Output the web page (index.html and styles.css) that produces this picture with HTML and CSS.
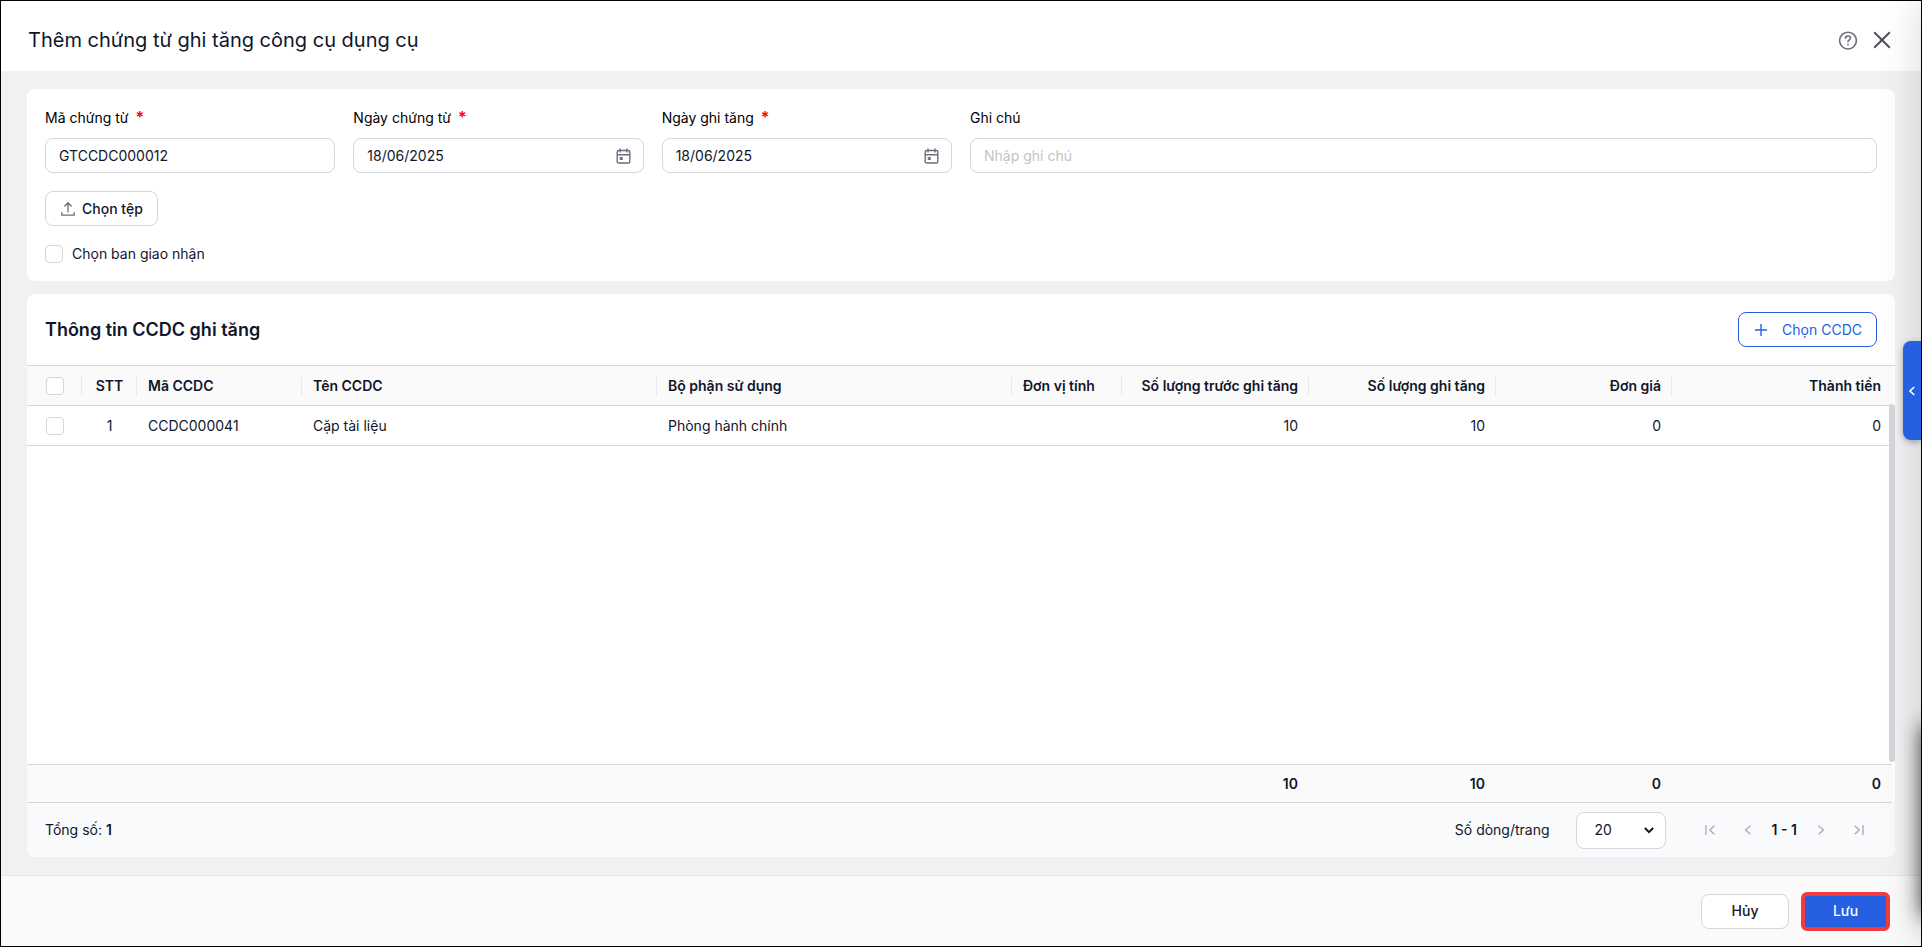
FILE: index.html
```html
<!DOCTYPE html>
<html lang="vi">
<head>
<meta charset="utf-8">
<meta name="viewport" content="width=device-width, initial-scale=1">
<title>Thêm chứng từ ghi tăng công cụ dụng cụ</title>
<link rel="stylesheet" href="styles.css">
</head>
<body>
<div class="dialog">
  <header class="dialog-header">
    <h1>Thêm chứng từ ghi tăng công cụ dụng cụ</h1>
    <div class="header-actions">
      <button class="icon-btn" type="button" aria-label="Trợ giúp">
        <svg width="20" height="20" viewBox="0 0 20 20" fill="none" stroke="#6b6e7d" stroke-width="1.6" stroke-linecap="round"><circle cx="10" cy="10.6" r="8.4"/><path d="M7.5 8.300c0-1.500 1.100-2.300 2.500-2.300s2.500.8 2.500 2.100c0 1.700-2.500 1.900-2.500 3.700"/><circle cx="10" cy="14.600" r=".3"/></svg>
      </button>
      <button class="icon-btn" type="button" aria-label="Đóng">
        <svg width="18" height="18" viewBox="0 0 18 18" fill="none" stroke="#4d4f57" stroke-width="2"><path d="M1.200 1.200l15.600 15.600M16.800 1.200L1.200 16.800"/></svg>
      </button>
    </div>
  </header>

  <main class="content">
    <section class="card form-card">
      <div class="fields">
        <div class="field">
          <label for="code">Mã chứng từ <span class="required">*</span></label>
          <div class="control"><input id="code" type="text" value="GTCCDC000012"></div>
        </div>
        <div class="field">
          <label for="doc-date">Ngày chứng từ <span class="required">*</span></label>
          <div class="control"><input id="doc-date" type="text" value="18/06/2025">
            <svg width="15" height="16" viewBox="0 0 15 16" fill="none" stroke="#6b6e7d" stroke-width="1.400"><rect x="1.200" y="2.500" width="12.600" height="12.500" rx="1.500"/><path d="M1.200 6.800h12.600M4 .500v4M11 .500v4"/><rect x="4.200" y="9.500" width="2" height="2" fill="#6b6e7d" stroke-width="1"/></svg>
          </div>
        </div>
        <div class="field">
          <label for="inc-date">Ngày ghi tăng <span class="required">*</span></label>
          <div class="control"><input id="inc-date" type="text" value="18/06/2025">
            <svg width="15" height="16" viewBox="0 0 15 16" fill="none" stroke="#6b6e7d" stroke-width="1.400"><rect x="1.200" y="2.500" width="12.600" height="12.500" rx="1.500"/><path d="M1.200 6.800h12.600M4 .500v4M11 .500v4"/><rect x="4.200" y="9.500" width="2" height="2" fill="#6b6e7d" stroke-width="1"/></svg>
          </div>
        </div>
        <div class="field field-wide">
          <label for="note">Ghi chú</label>
          <div class="control"><input id="note" type="text" placeholder="Nhập ghi chú"></div>
        </div>
      </div>
      <button class="btn btn-file" type="button">
        <svg width="14" height="14" viewBox="0 0 14 14" fill="none" stroke="#6b6e7d" stroke-width="1.300" stroke-linecap="round" stroke-linejoin="round"><path d="M7 10V1M3.800 4L7 .800 10.200 4M.800 10.500v2.700h12.400v-2.700"/></svg>
        Chọn tệp
      </button>
      <label class="check-line"><input class="check" type="checkbox"> Chọn ban giao nhận</label>
    </section>

    <section class="card grid-card">
      <div class="grid-head">
        <h2>Thông tin CCDC ghi tăng</h2>
        <button class="btn btn-outline" type="button">
          <svg width="12" height="12" viewBox="0 0 12 12" fill="none" stroke="#2460e0" stroke-width="1.400"><path d="M6 0v12M0 6h12"/></svg>
          Chọn CCDC
        </button>
      </div>
      <div class="table-area">
        <table class="grid">
          <colgroup><col class="w-check"><col class="w-check"><col class="w-code"><col><col><col class="w-unit"><col class="w-qty"><col class="w-qty"><col class="w-price"><col class="w-total"></colgroup>
          <thead>
            <tr>
              <th class="pick"><input class="check" type="checkbox" aria-label="Chọn tất cả"></th>
              <th class="mid">STT</th><th>Mã CCDC</th><th>Tên CCDC</th><th>Bộ phận sử dụng</th><th>Đơn vị tính</th>
              <th class="num">Số lượng trước ghi tăng</th><th class="num">Số lượng ghi tăng</th><th class="num">Đơn giá</th><th class="num">Thành tiền</th>
            </tr>
          </thead>
          <tbody>
            <tr>
              <td class="pick"><input class="check" type="checkbox" aria-label="Chọn dòng 1"></td>
              <td class="mid">1</td><td>CCDC000041</td><td>Cặp tài liệu</td><td>Phòng hành chính</td><td></td>
              <td class="num">10</td><td class="num">10</td><td class="num">0</td><td class="num">0</td>
            </tr>
            <tr class="filler"><td colspan="10"></td></tr>
          </tbody>
          <tfoot>
            <tr><td colspan="6"></td><td class="num">10</td><td class="num">10</td><td class="num">0</td><td class="num">0</td></tr>
          </tfoot>
        </table>
        <div class="scrollbar"></div>
      </div>
      <div class="pager">
        <div>Tổng số: <b>1</b></div>
        <div class="pager-tools">
          <label for="size">Số dòng/trang</label>
          <div class="select-wrap">
            <select id="size"><option>20</option></select>
            <svg width="10" height="7" viewBox="0 0 10 7" fill="none" stroke="#10162b" stroke-width="2"><path d="M.900 1l4.100 4.100L9.100 1"/></svg>
          </div>
          <div class="pages">
            <button class="icon-btn" type="button" aria-label="Trang đầu"><svg width="10" height="10" viewBox="0 0 10 10" fill="none" stroke="#a9abb3" stroke-width="1.300"><path d="M1 0v10M9.300.700L4.800 5l4.500 4.300"/></svg></button>
            <button class="icon-btn" type="button" aria-label="Trang trước"><svg width="10" height="10" viewBox="0 0 10 10" fill="none" stroke="#a9abb3" stroke-width="1.300"><path d="M7.500.700L2.500 5l5 4.300"/></svg></button>
            <b>1 - 1</b>
            <button class="icon-btn" type="button" aria-label="Trang sau"><svg width="10" height="10" viewBox="0 0 10 10" fill="none" stroke="#a9abb3" stroke-width="1.300"><path d="M2.500.700l5 4.300-5 4.300"/></svg></button>
            <button class="icon-btn" type="button" aria-label="Trang cuối"><svg width="10" height="10" viewBox="0 0 10 10" fill="none" stroke="#a9abb3" stroke-width="1.300"><path d="M9 0v10M.700.700L5.200 5 .700 9.300"/></svg></button>
          </div>
        </div>
      </div>
    </section>
  </main>

  <footer class="dialog-footer">
    <button class="btn btn-cancel" type="button">Hủy</button>
    <button class="btn btn-save" type="button">Lưu</button>
  </footer>

  <div class="edge-shadow"></div>
  <div class="corner-shadow"></div>
  <button class="side-tab" type="button" aria-label="Mở bảng bên">
    <svg width="6" height="10" viewBox="0 0 6 10" fill="none" stroke="#fff" stroke-width="1.600"><path d="M5.300 1L1 5l4.300 4"/></svg>
  </button>
</div>
</body>
</html>
```
FILE: styles.css
```css
* { box-sizing: border-box; }
body {
  margin: 0;
  font: 14px/20px Inter, "Liberation Sans", sans-serif;
  color: #10162b;
}
button, input, select { font: inherit; color: inherit; margin: 0; }
h1, h2 { margin: 0; }
.dialog {
  position: relative;
  min-height: 100vh;
  display: flex;
  flex-direction: column;
  border: 1px solid #000;
  background: #f0f1f3;
  overflow: hidden;
}
.dialog-header {
  display: flex;
  justify-content: space-between;
  align-items: center;
  height: 70px;
  padding: 8px 30px 0 27px;
  background: #fff;
}
.dialog-header h1 { font-size: 20px; line-height: 28px; font-weight: 400; }
.header-actions { display: flex; align-items: center; gap: 15px; }
.icon-btn { display: flex; padding: 0; border: 0; background: none; }

.content {
  flex: 1;
  display: flex;
  flex-direction: column;
  gap: 13px;
  padding: 18px 26px;
}
.card { background: #fff; border-radius: 8px; overflow: hidden; }
.form-card {
  display: flex;
  flex-direction: column;
  align-items: flex-start;
  gap: 18px;
  padding: 18px 18px 17px;
}
.fields {
  width: 100%;
  display: grid;
  grid-template-columns: repeat(6, minmax(0, 1fr));
  gap: 18px;
}
.field { display: flex; flex-direction: column; gap: 9px; color: #000; }
.field > label { line-height: 22px; }
.field-wide { grid-column: span 3; }
.required { color: #f00; margin-left: 3px; font-size: 16px; font-weight: 600; line-height: 20px; }
.control {
  display: flex;
  align-items: center;
  height: 35px;
  padding: 0 12px 0 13px;
  border: 1px solid #d5d6da;
  border-radius: 8px;
  background: #fff;
  color: #10162b;
}
.control input { flex: 1; min-width: 0; padding: 0; border: 0; outline: 0; background: none; }
.control input::placeholder { color: #c2c3c7; opacity: 1; }
.btn {
  display: flex;
  align-items: center;
  justify-content: center;
  height: 35px;
  padding: 0 14px;
  border: 1px solid #d5d6da;
  border-radius: 8px;
  background: #fff;
}
.btn-file { gap: 7px; padding-left: 15px; font-weight: 500; }
.btn-outline { gap: 15px; padding-left: 16px; border-color: #2460e0; color: #2460e0; }
.check-line { display: flex; align-items: center; gap: 9px; height: 20px; }
.check {
  appearance: none;
  display: block;
  width: 18px;
  height: 18px;
  border: 1px solid #d5d6da;
  border-radius: 4px;
  background: #fff;
}

.grid-card { flex: 1; display: flex; flex-direction: column; }
.grid-head {
  display: flex;
  justify-content: space-between;
  align-items: center;
  padding: 18px;
}
.grid-head h2 { font-size: 18px; line-height: 24px; font-weight: 600; }
.table-area { flex: 1; display: flex; position: relative; border-top: 1px solid #d5d6da; }
.grid { flex: 1; width: 100%; margin-right: 3px; table-layout: fixed; border-collapse: separate; border-spacing: 0; }
.w-check { width: 55px; }
.w-code { width: 165px; }
.w-unit { width: 110px; }
.w-qty { width: 187px; }
.w-price { width: 176px; }
.w-total { width: 220px; }
.grid th, .grid td {
  height: 40px;
  padding: 0 11px;
  border-bottom: 1px solid #d5d6da;
  text-align: left;
  white-space: nowrap;
}
.grid th {
  font-weight: 600;
  background: linear-gradient(#e6e7ea, #e6e7ea) right center / 1px 18px no-repeat #fafafa;
}
.grid th:last-child { background: #fafafa; }
.grid .pick { padding-left: 19px; }
.grid .mid { text-align: center; }
.grid .num { text-align: right; }
.grid .filler td { height: auto; }
.grid tfoot td { height: 38px; background: #fafafa; font-weight: 600; }
.scrollbar {
  position: absolute;
  right: 0;
  top: 38px;
  bottom: 41px;
  width: 6px;
  border-radius: 3px;
  background: #d5d6da;
}
.pager {
  display: flex;
  justify-content: space-between;
  align-items: center;
  height: 54px;
  padding: 0 31px 0 18px;
  background: #f9fafc;
}
.pager b { font-weight: 600; }
.pager-tools, .pages { display: flex; align-items: center; }
.select-wrap { position: relative; margin: 0 39px 0 26px; }
.select-wrap select {
  appearance: none;
  display: block;
  width: 90px;
  height: 37px;
  padding: 0 18px;
  border: 1px solid #d5d6da;
  border-radius: 8px;
  background: #fff;
}
.select-wrap svg { position: absolute; right: 12px; top: 15px; }
.pages .icon-btn + .icon-btn { margin-left: 28px; }
.pages b { margin: 0 19px; }

.dialog-footer {
  display: flex;
  justify-content: flex-end;
  align-items: center;
  gap: 12px;
  height: 71px;
  padding: 0 31px;
  border-top: 1px solid #e6e7ea;
  background: #fafafa;
}
.btn-cancel { width: 88px; font-weight: 500; }
.btn-save {
  width: 89px;
  height: 39px;
  border: 4px solid #f43b3b;
  border-radius: 6px;
  background: #2460e0;
  color: #fff;
  font-weight: 500;
}

.edge-shadow {
  position: absolute;
  left: 100%;
  top: 0;
  bottom: 0;
  width: 40px;
  box-shadow: 0 0 40px rgba(0, 0, 0, .16);
  pointer-events: none;
}
.corner-shadow {
  position: absolute;
  left: 100%;
  bottom: 30px;
  width: 40px;
  height: 190px;
  box-shadow: 0 0 20px rgba(0, 0, 0, .7);
  pointer-events: none;
}
.side-tab {
  position: absolute;
  right: 0;
  top: 340px;
  width: 18px;
  height: 99px;
  display: flex;
  align-items: center;
  justify-content: center;
  padding: 0;
  border: 0;
  border-radius: 8px 0 0 8px;
  background: #2460e0;
  box-shadow: 0 2px 6px rgba(0, 0, 0, .3);
}
```
